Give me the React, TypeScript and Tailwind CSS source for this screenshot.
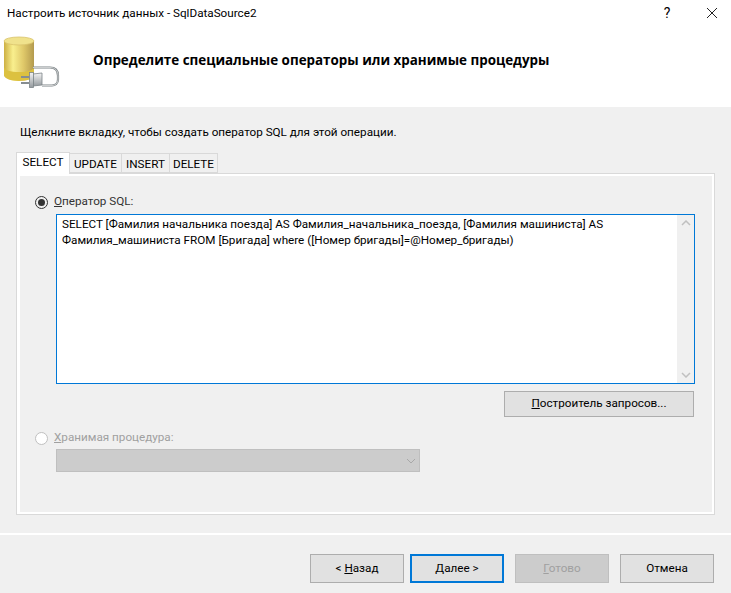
const font = "font-['Roboto','Open_Sans',sans-serif]";

const DbIcon = () => (
    <svg width="60" height="60" viewBox="0 0 60 60" className="shrink-0">
        <defs>
            <linearGradient id="can" x1="0" x2="1" y1="0" y2="0">
                <stop offset="0" stopColor="#cdb043" />
                <stop offset="0.3" stopColor="#f9ef8e" />
                <stop offset="0.65" stopColor="#dfc869" />
                <stop offset="1" stopColor="#b39a4e" />
            </linearGradient>
            <linearGradient id="plug" x1="0" x2="0" y1="0" y2="1">
                <stop offset="0" stopColor="#f4f4f4" />
                <stop offset="1" stopColor="#949a9e" />
            </linearGradient>
        </defs>
        <path d="M4 11v34c0 3 7 6 15 6s15-3 15-6V11z" fill="url(#can)" />
        <path d="M4 37v8c0 3 7 6 15 6s15-3 15-6v-8c0 3-7 5-15 5s-15-2-15-5z" fill="#dcc140" />
        <ellipse cx="19" cy="11" rx="15" ry="4" fill="#f0e28c" stroke="#d9c36c" strokeWidth="0.8" />
        <path d="M33 37.500h17c5 0 8 3 8 8v4c0 4-3 6-6 6H42" fill="none" stroke="#7f8689" strokeWidth="2.2" />
        <path d="M33 37.500h17c5 0 8 3 8 8v4c0 4-3 6-6 6H42" fill="none" stroke="#ececec" strokeWidth="0.7" />
        <path d="M33 44l9-1v12l-9 1z" fill="url(#plug)" stroke="#7c8488" strokeWidth="0.8" />
        <rect x="29.500" y="42.500" width="4" height="15" fill="url(#plug)" stroke="#7c8488" strokeWidth="0.8" />
        <path d="M21 47h8M21 53h8" stroke="#868d91" strokeWidth="2" />
    </svg>
);

const Tab = ({ label, active, w }: { label: string; active?: boolean; w: string }) => (
    <div
        className={
            active
                ? `${w} h-[22px] bg-[#ffffff] border border-b-0 border-[#d9d9d9] text-center leading-[18px] relative z-10 -mb-px`
                : `${w} h-[20px] bg-[#f0f0f0] border border-[#d9d9d9] text-center leading-[20px] -ml-px`
        }
    >
        {label}
    </div>
);

const Btn = ({ children, w, focus, off, cls }: { children: React.ReactNode; w: string; focus?: boolean; off?: boolean; cls?: string }) => (
    <div
        className={`${w} ${cls ?? ""} h-[29px] flex items-center justify-center ${
            focus
                ? "border-2 border-[#0078d7] bg-[#e1e1e1]"
                : off
                ? "border border-[#bfbfbf] bg-[#cccccc] text-[#a0a0a0]"
                : "border border-[#adadad] bg-[#e1e1e1]"
        }`}
    >
        {children}
    </div>
);

const App = () => {
    return (
        <div className={`${font} w-[731px] h-[593px] overflow-hidden bg-[#f0f0f0] text-[11.7px] text-[#000000] flex flex-col`}>
            <div className="bg-white h-[107px] shrink-0">
                <div className="h-[30px] flex items-center pl-[7px]">
                    <span className="flex-1 -mt-[3px]">Настроить источник данных - SqlDataSource2</span>
                    <span className="w-[46px] text-center text-[14px] -mt-[4px]">?</span>
                    <svg width="12" height="12" viewBox="0 0 12 12" className="mr-[13px] ml-[16px] -mt-[4px]">
                        <path d="M1 1l10 10M11 1L1 11" stroke="#222" strokeWidth="1" fill="none" />
                    </svg>
                </div>
                <div className="flex items-center h-[60px]">
                    <DbIcon />
                    <h1 className="ml-[33px] font-['Open_Sans',sans-serif] text-[13.4px] font-bold">Определите специальные операторы или хранимые процедуры</h1>
                </div>
            </div>

            <div className="pl-[20px] pt-[17px] h-[46px] shrink-0">Щелкните вкладку, чтобы создать оператор SQL для этой операции.</div>

            <div className="ml-[16px] w-[699px] shrink-0">
                <div className="flex items-end h-[20px]">
                    <Tab label="SELECT" active w="w-[54px]" />
                    <Tab label="UPDATE" w="w-[53px]" />
                    <Tab label="INSERT" w="w-[49px]" />
                    <Tab label="DELETE" w="w-[49px]" />
                </div>
                <div className="h-[342px] border border-[#d9d9d9] bg-[#f0f0f0]">
                    <div className="h-full border-[2px] border-l-[3px] border-white pl-[15px] pt-[18px]">
                        <div className="flex items-center h-[16px]">
                            <div className="w-[13px] h-[13px] rounded-full border border-[#333] flex items-center justify-center">
                                <div className="w-[7px] h-[7px] rounded-full bg-[#333]" />
                            </div>
                            <span className="ml-[6px] text-[#333]">
                                <u>О</u>ператор SQL:
                            </span>
                        </div>
                        <div className="ml-[21px] mt-[4px] w-[639px] h-[170px] border border-[#0078d7] bg-white flex">
                            <div className="flex-1 pl-[5px] pt-[1px] leading-[16px]">
                                SELECT [Фамилия начальника поезда] AS Фамилия_начальника_поезда, [Фамилия машиниста] AS Фамилия_машиниста FROM [Бригада] where ([Номер бригады]=@Номер_бригады)
                            </div>
                            <div className="w-[17px] bg-[#f0f0f0] flex flex-col justify-between items-center py-[5px]">
                                <svg width="10" height="6" viewBox="0 0 10 6"><path d="M1 5l4-4 4 4" stroke="#c0c0c0" strokeWidth="1.5" fill="none" /></svg>
                                <svg width="10" height="6" viewBox="0 0 10 6"><path d="M1 1l4 4 4-4" stroke="#c0c0c0" strokeWidth="1.5" fill="none" /></svg>
                            </div>
                        </div>
                        <div className="flex justify-end w-[659px] mt-[7px]">
                            <div className="w-[190px] h-[26px] border border-[#adadad] bg-[#e1e1e1] flex items-center justify-center">
                                <span><u>П</u>остроитель запросов...</span>
                            </div>
                        </div>
                        <div className="flex items-center h-[16px] mt-[13px] text-[#a0a0a0]">
                            <div className="w-[13px] h-[13px] rounded-full border border-[#c0c0c0] bg-white" />
                            <span className="ml-[6px]">
                                <u>Х</u>ранимая процедура:
                            </span>
                        </div>
                        <div className="ml-[21px] mt-[3px] w-[364px] h-[23px] border border-[#bfbfbf] bg-[#cccccc] flex items-center justify-end pr-[3px]">
                            <svg width="10" height="6" viewBox="0 0 10 6"><path d="M1 1l4 4 4-4" stroke="#a8a8a8" strokeWidth="1" fill="none" /></svg>
                        </div>
                    </div>
                </div>
            </div>

            <div className="mt-[18px] h-[2px] bg-white shrink-0" />
            <div className="flex justify-end pr-[17px] mt-[19px]">
                <Btn w="w-[94px]"><span>&lt; <u>Н</u>азад</span></Btn>
                <Btn w="w-[94px]" cls="ml-[6px]" focus><span><u>Д</u>алее &gt;</span></Btn>
                <Btn w="w-[94px]" cls="ml-[11px]" off><span><u>Г</u>отово</span></Btn>
                <Btn w="w-[94px]" cls="ml-[11px]"><span>Отмена</span></Btn>
            </div>
        </div>
    );
};

export default App;
